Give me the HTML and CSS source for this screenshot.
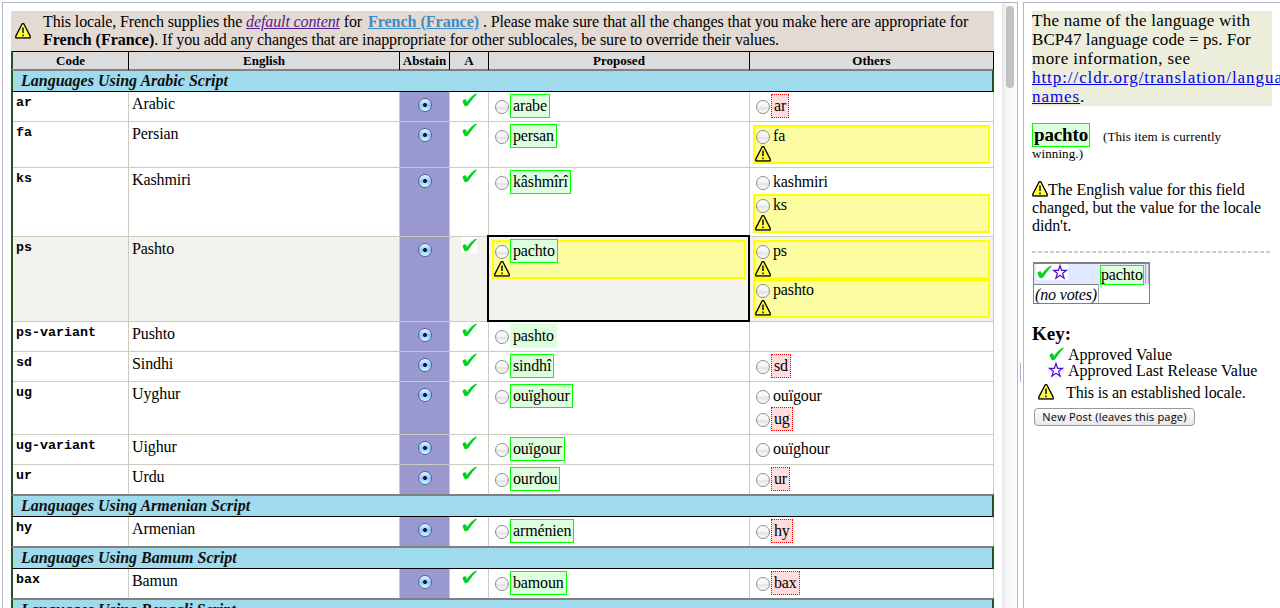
FILE: index.html
```
<!DOCTYPE html>
<html lang="en">
<head>
<meta charset="utf-8">
<title>Survey Tool</title>
<link rel="stylesheet" href="styles.css">
</head>
<body>
<svg class="defs" width="0" height="0">
  <symbol id="warn" viewBox="0 0 16 16"><path d="M7.2.7h1.6l6.4 12.4v1.7H.8v-1.7z" fill="#ffff3c" stroke="#000" stroke-width="1.3" stroke-linejoin="round"/><path d="M.8 15.3h14.6" stroke="#555" stroke-width="1"/><path d="M7 4.5h2v5.5H7zM7 11.5h2v1.7H7z" fill="#444"/></symbol>
  <symbol id="tick" viewBox="0 0 16 16"><path transform="translate(.5 1)" d="M1 8.200C1.500 6.800 3.300 5.800 4.200 6.400c.8.5.9 1.700 1.200 2.700C8 5 11.500 1.600 14.900.5c.6.7.2 1.200-.4 1.700C11.500 5.200 9 8.500 7 11.800c-.9 1.500-3.500 1.800-4.200.6C2 11 1.600 9.600 1 8.200z" fill="#00d423"/></symbol>
  <symbol id="star" viewBox="0 0 16 16"><path d="M8 1.500l1.600 4.800h5l-4 3 1.500 4.900L8 11.300l-4.100 2.900 1.500-4.900-4-3h5z" fill="#fff" stroke="#4b10d8" stroke-width="1.200"/></symbol>
</svg>
<div class="app">
  <main class="pane list">
    <div class="content">
      <div class="notice">
        <svg class="icon"><use href="#warn"/></svg>
        <p>This locale, French supplies the <a class="visited" href="#">default content</a> for <a class="locale" href="#">French (France)</a> . Please make sure that all the changes that you make here are appropriate for<br><b>French (France)</b>. If you add any changes that are inappropriate for other sublocales, be sure to override their values.</p>
      </div>
      <div class="table">
        <div class="row head"><div>Code</div><div>English</div><div>Abstain</div><div>A</div><div>Proposed</div><div>Others</div></div>
        <div class="section">Languages Using Arabic Script</div>
        <div class="row"><div class="code">ar</div><div class="eng">Arabic</div><div class="abs"><i class="radio on"></i></div><div class="ok"><svg class="icon"><use href="#tick"/></svg></div>
          <div class="vals"><div class="item"><i class="radio"></i><span class="val win">arabe</span></div></div>
          <div class="vals"><div class="item"><i class="radio"></i><span class="val bad">ar</span></div></div></div>
        <div class="row"><div class="code">fa</div><div class="eng">Persian</div><div class="abs"><i class="radio on"></i></div><div class="ok"><svg class="icon"><use href="#tick"/></svg></div>
          <div class="vals"><div class="item"><i class="radio"></i><span class="val win">persan</span></div></div>
          <div class="vals"><div class="item warned"><i class="radio"></i><span class="val plain">fa</span><svg class="icon"><use href="#warn"/></svg></div></div></div>
        <div class="row"><div class="code">ks</div><div class="eng">Kashmiri</div><div class="abs"><i class="radio on"></i></div><div class="ok"><svg class="icon"><use href="#tick"/></svg></div>
          <div class="vals"><div class="item"><i class="radio"></i><span class="val win">kâshmîrî</span></div></div>
          <div class="vals"><div class="item"><i class="radio"></i><span class="val plain">kashmiri</span></div><div class="item warned"><i class="radio"></i><span class="val plain">ks</span><svg class="icon"><use href="#warn"/></svg></div></div></div>
        <div class="row current"><div class="code">ps</div><div class="eng">Pashto</div><div class="abs"><i class="radio on"></i></div><div class="ok"><svg class="icon"><use href="#tick"/></svg></div>
          <div class="vals selected"><div class="item warned"><i class="radio"></i><span class="val win">pachto</span><svg class="icon"><use href="#warn"/></svg></div></div>
          <div class="vals"><div class="item warned"><i class="radio"></i><span class="val plain">ps</span><svg class="icon"><use href="#warn"/></svg></div><div class="item warned"><i class="radio"></i><span class="val plain">pashto</span><svg class="icon"><use href="#warn"/></svg></div></div></div>
        <div class="row"><div class="code">ps-variant</div><div class="eng">Pushto</div><div class="abs"><i class="radio on"></i></div><div class="ok"><svg class="icon"><use href="#tick"/></svg></div>
          <div class="vals"><div class="item"><i class="radio"></i><span class="val inherit">pashto</span></div></div>
          <div class="vals"></div></div>
        <div class="row"><div class="code">sd</div><div class="eng">Sindhi</div><div class="abs"><i class="radio on"></i></div><div class="ok"><svg class="icon"><use href="#tick"/></svg></div>
          <div class="vals"><div class="item"><i class="radio"></i><span class="val win">sindhî</span></div></div>
          <div class="vals"><div class="item"><i class="radio"></i><span class="val bad">sd</span></div></div></div>
        <div class="row"><div class="code">ug</div><div class="eng">Uyghur</div><div class="abs"><i class="radio on"></i></div><div class="ok"><svg class="icon"><use href="#tick"/></svg></div>
          <div class="vals"><div class="item"><i class="radio"></i><span class="val win">ouïghour</span></div></div>
          <div class="vals"><div class="item"><i class="radio"></i><span class="val plain">ouïgour</span></div><div class="item"><i class="radio"></i><span class="val bad">ug</span></div></div></div>
        <div class="row"><div class="code">ug-variant</div><div class="eng">Uighur</div><div class="abs"><i class="radio on"></i></div><div class="ok"><svg class="icon"><use href="#tick"/></svg></div>
          <div class="vals"><div class="item"><i class="radio"></i><span class="val win">ouïgour</span></div></div>
          <div class="vals"><div class="item"><i class="radio"></i><span class="val plain">ouïghour</span></div></div></div>
        <div class="row last"><div class="code">ur</div><div class="eng">Urdu</div><div class="abs"><i class="radio on"></i></div><div class="ok"><svg class="icon"><use href="#tick"/></svg></div>
          <div class="vals"><div class="item"><i class="radio"></i><span class="val win">ourdou</span></div></div>
          <div class="vals"><div class="item"><i class="radio"></i><span class="val bad">ur</span></div></div></div>
        <div class="section">Languages Using Armenian Script</div>
        <div class="row last"><div class="code">hy</div><div class="eng">Armenian</div><div class="abs"><i class="radio on"></i></div><div class="ok"><svg class="icon"><use href="#tick"/></svg></div>
          <div class="vals"><div class="item"><i class="radio"></i><span class="val win">arménien</span></div></div>
          <div class="vals"><div class="item"><i class="radio"></i><span class="val bad">hy</span></div></div></div>
        <div class="section">Languages Using Bamum Script</div>
        <div class="row last"><div class="code">bax</div><div class="eng">Bamun</div><div class="abs"><i class="radio on"></i></div><div class="ok"><svg class="icon"><use href="#tick"/></svg></div>
          <div class="vals"><div class="item"><i class="radio"></i><span class="val win">bamoun</span></div></div>
          <div class="vals"><div class="item"><i class="radio"></i><span class="val bad">bax</span></div></div></div>
        <div class="section">Languages Using Bengali Script</div>
      </div>
    </div>
    <div class="scrollbar"><div class="thumb"></div></div>
  </main>
  <div class="splitter"><span></span></div>
  <aside class="pane info">
    <p class="help">The name of the language with<br><span class="tight">BCP47 language code = ps. For</span><br><span class="loose">more information, see</span><br><a href="#">http://cldr.org/translation/language-</a><br><a href="#">names</a>.</p>
    <p class="status"><span class="winner">pachto</span><small>(This item is currently<br></small><small class="cont">winning.)</small></p>
    <p class="changed"><svg class="icon"><use href="#warn"/></svg>The English value for this field<br>changed, but the value for the locale<br>didn't.</p>
    <div class="rule"></div>
    <div class="votes">
      <div class="vote"><div class="marks"><svg class="icon white"><use href="#tick"/></svg><svg class="icon white"><use href="#star"/></svg></div><span class="choice">pachto</span><div class="bars"></div></div>
      <div class="none">(no votes)</div>
    </div>
    <h3>Key:</h3>
    <div class="key"><svg class="icon"><use href="#tick"/></svg>Approved Value</div>
    <div class="key"><svg class="icon"><use href="#star"/></svg>Approved Last Release Value</div>
    <div class="key established"><svg class="icon"><use href="#warn"/></svg>This is an established locale.</div>
    <button>New Post (leaves this page)</button>
  </aside>
</div>
</body>
</html>
```
FILE: styles.css
```
* { box-sizing: border-box; }
body { margin: 0; height: 608px; overflow: hidden; background: #fff; color: #000; font: 16px/18px "Liberation Serif", "Times New Roman", serif; }
p, h3 { margin: 0; }
.defs { position: absolute; }
.icon { display: block; width: 16px; height: 16px; flex: none; }
.app { display: flex; height: 608px; padding: 2px 0 0 2px; white-space: nowrap; }
.pane { border: 1px solid #b3b6c6; border-bottom: 0; overflow: hidden; }
.list { display: flex; justify-content: space-between; width: 1016px; padding-left: 8px; flex: none; }
.content { width: 983px; padding-top: 8px; flex: none; }
.scrollbar { width: 15px; padding: 3px 3px 0 4px; background: linear-gradient(90deg, #e7e7e7, #f8f8f8 35%, #fcfcfc); }
.thumb { width: 8px; height: 82px; border-radius: 4px; background: #c1c1c1; }
.splitter { width: 5px; flex: none; padding: 361px 0 0 2px; }
.splitter span { display: block; width: 1px; height: 19px; background: #a9b3cd; }

.notice { display: flex; height: 40px; padding: 2px 4px; background: #e4dad4; letter-spacing: -.12px; }
.notice .icon { margin: 10px 12px 0 0; }
a { color: #0000ee; text-decoration: underline; }
.notice .visited { color: #551a8b; font-style: italic; }
.notice .locale { color: #3d8dc4; font-weight: bold; margin-left: 2px; letter-spacing: 0; }
.notice b { letter-spacing: 0; }

.table { border-left: 2px solid #235523; }
.row { display: grid; grid-template-columns: 116px 271px 50px 39px 261px 244px; }
.row > div { border-right: 1px solid #cccdc0; border-bottom: 1px solid #cccdc0; }
.row.last > div { border-bottom: 0; min-height: 29px; }
.row.head { height: 18px; background: #dcdcdc; border-top: 1px solid #000; font-size: 13px; font-weight: bold; line-height: 18px; text-align: center; }
.row.head > div { border-bottom: 0; border-right-color: #000; }
.section { height: 23px; margin-left: -2px; border-top: 2px solid #808080; border-bottom: 1px solid #000; border-left: 2px solid #235523; border-right: 2px solid #235523; padding: 1px 0 0 8px; background: #9fdbec; color: #101010; font-weight: bold; font-style: italic; }
.code { padding: 3px 0 0 3px; font: bold 13.33px/15px "Liberation Mono", "Courier New", monospace; }
.eng { padding: 3px 0 0 3px; letter-spacing: -.1px; }
.row > .abs { background: #9999d0; padding: 6px 0 0 18px; }
.ok { padding-left: 11px; }
.vals { padding: 3px; letter-spacing: -.15px; }
.item { display: flex; height: 23px; padding: 5px 0 0 3px; }
.item .val { margin: -6px 0 0 1px; }
.item.warned { height: 39px; padding: 3px 0 0 1px; border: 2px solid #ff0; background: #fbfda0; flex-wrap: wrap; align-content: flex-start; }
.item.warned .icon { flex: none; margin: -2px calc(100% - 16px) 0 -1px; }
.radio { display: block; width: 14px; height: 14px; flex: none; border: 1px solid #8d8d8d; border-radius: 50%; background: linear-gradient(#fff, #f2f2f2 50%, #e2e2e2 55%, #fff); }
.radio.on { border-color: #5060a4; background: radial-gradient(circle at 50% 50%, #101c38 0 1.7px, transparent 2.3px), linear-gradient(#e9f4ff, #9ccbfa 45%, #8fc5f8 55%, #d6ffff); }
.val { height: 24px; padding: 0 2px; border: 1px solid transparent; line-height: 22px; }
.win { background: #dfd; border-color: #0f0; }
.inherit { background: #dfd; }
.bad { background: #fdd; border: 1px dotted #f00; }
.plain { border-left: 0; }
.current { background: #f3f2ed; }
.current .ok .icon { background: #fff; }
.selected { position: relative; }
.selected::after { content: ""; position: absolute; inset: -2px -1px -1px -2px; border: 2px solid #000; }

.info { flex: 1; padding: 8px 8px 0; border-right: 0; }
.help { height: 95px; background: #ededdc; font-size: 17px; line-height: 19px; letter-spacing: .25px; }
.help a { letter-spacing: .93px; }
.help .tight { letter-spacing: .08px; }
.help .loose { letter-spacing: .42px; }
.status { margin-top: 17px; }
.winner { display: inline-block; height: 24px; padding: 0 1px; border: 1px solid #0f0; background: #dfd; font-size: 19px; font-weight: bold; line-height: 22px; margin-right: 13px; letter-spacing: -.15px; }
.status small { font-size: 13px; letter-spacing: .1px; }
.status .cont { display: block; height: 14px; line-height: 14px; }
.changed { margin-top: 20px; letter-spacing: -.09px; }
.changed .icon { display: inline-block; vertical-align: -2px; }
.rule { margin-top: 16px; height: 2px; background: repeating-linear-gradient(90deg, #cccbdc 0 4px, transparent 4px 6px); }
.votes { width: 117px; height: 42px; margin: 9px 0 0 1px; border: 1px solid #808080; border-top-width: 2px; letter-spacing: -.15px; }
.vote { display: flex; height: 20px; background: #e0e9ff; }
.marks { display: flex; flex: none; width: 66px; padding-left: 2px; }
.white { background: #fff; }
.choice { flex: none; width: 44px; height: 20px; margin-top: 1px; padding: 0; border: 1px solid #0f0; background: #dfd; line-height: 18px; }
.bars { width: 4px; margin-left: 1px; border: solid #aaa; border-width: 0 1px; }
.none { width: 65px; height: 19px; padding-left: 1px; border-top: 1px solid #808080; border-right: 1px solid #aaa; font-style: italic; line-height: 19px; }
h3 { margin: 19px 0 1px; font-size: 19px; line-height: 22px; }
.key { display: flex; gap: 4px; height: 16px; padding-left: 16px; line-height: 18px; }
.key.established { height: 23px; padding: 6px 0 0 6px; gap: 12px; letter-spacing: -.13px; }
button { display: block; width: 161px; height: 18px; margin: 7px 0 0 2px; padding: 0; border: 1px solid #999; border-radius: 4px; background: linear-gradient(#fff, #f2f2f2 50%, #e9e9e9); color: #000; font: 11px/14px "Open Sans", "DejaVu Sans", sans-serif; letter-spacing: .2px; }
```
